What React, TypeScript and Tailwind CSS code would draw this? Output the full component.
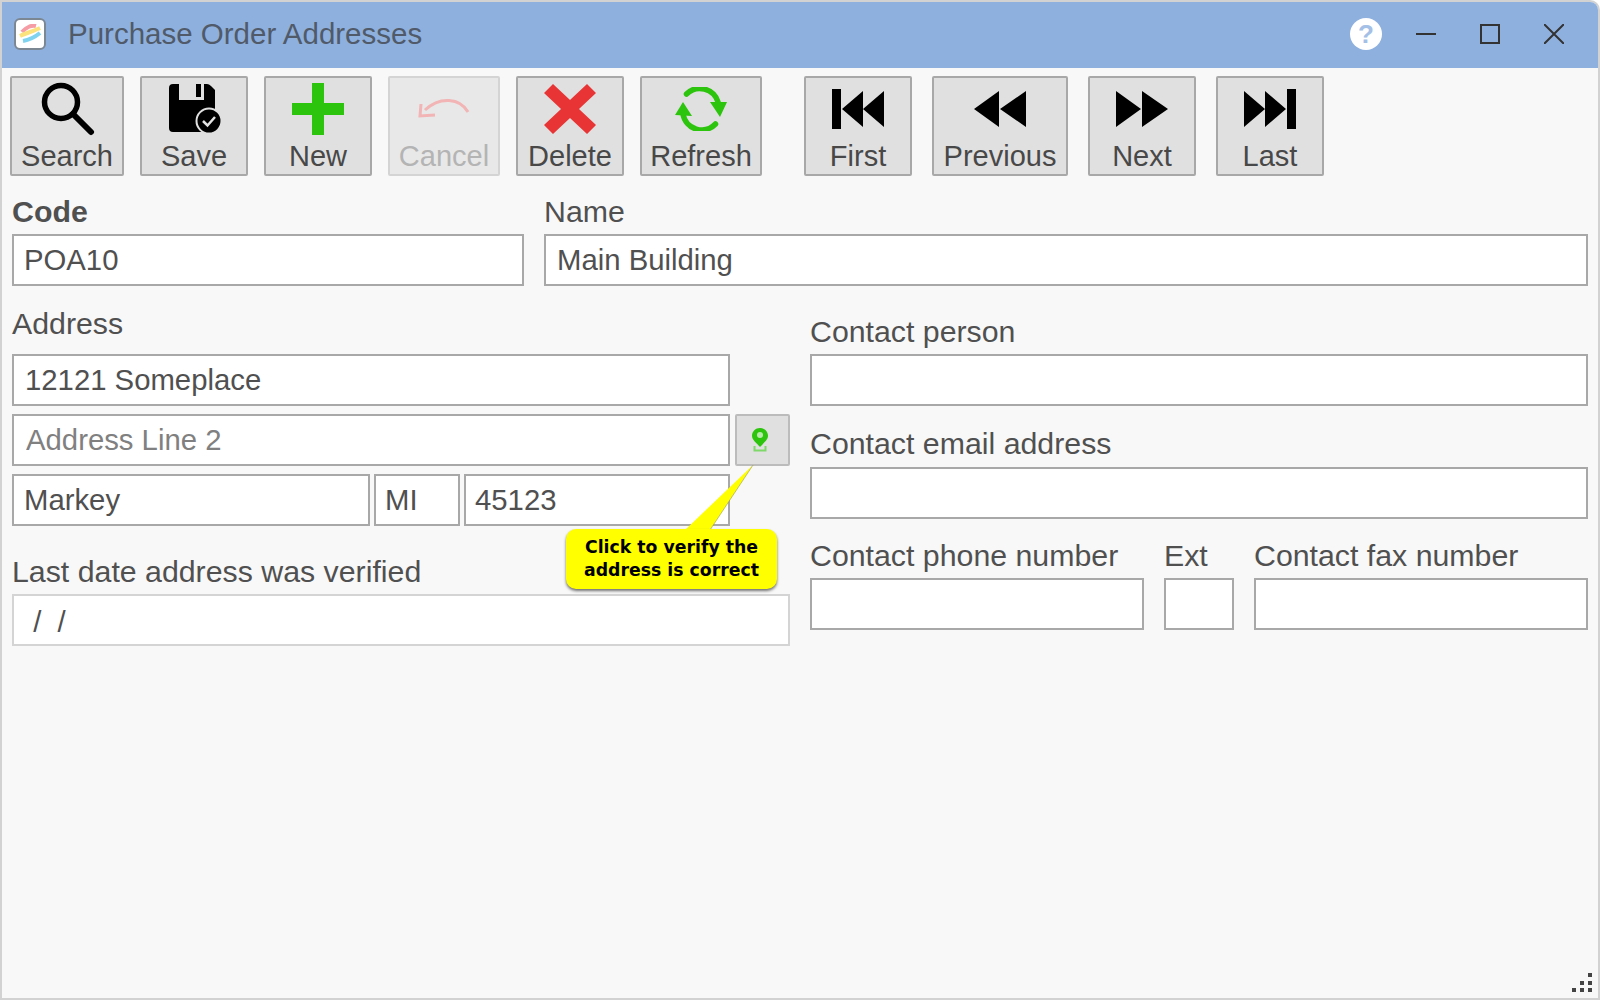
const font = "[font-family:'Liberation_Sans',Arial,sans-serif]";

function Field({
  value,
  placeholder,
  className = "",
  light,
}: {
  value?: string;
  placeholder?: string;
  className?: string;
  light?: boolean;
}) {
  return (
    <input
      readOnly
      defaultValue={value}
      placeholder={placeholder}
      className={`h-[52px] min-w-0 border-2 bg-white text-[29.3px] text-[#505050] outline-none placeholder:text-[#808080] ${
        light ? "border-[#d4d4d4]" : "border-[#a8a8a8]"
      } ${className}`}
    />
  );
}

function Label({ children, className = "" }: { children: string; className?: string }) {
  return <div className={`h-[36px] text-[30.3px] leading-[36px] text-[#505050] ${className}`}>{children}</div>;
}

function SearchIcon() {
  return (
    <svg width="54" height="54" viewBox="0 0 54 54" className="block">
      <circle cx="20" cy="20" r="16.5" fill="none" stroke="#000" strokeWidth="5.5" />
      <path d="M32 32 L50 50" stroke="#000" strokeWidth="6" strokeLinecap="round" />
    </svg>
  );
}

function SaveIcon() {
  return (
    <svg width="54" height="50" viewBox="0 0 54 50" className="block">
      <path
        d="M4 0 H10 V16 H35 V0 H38 Q40 0 42 2 L46 6 V44 Q46 48 42 48 H4 Q0 48 0 44 V4 Q0 0 4 0 Z"
        fill="#000"
      />
      <rect x="27" y="0" width="5" height="13" fill="#000" />
      <circle cx="40" cy="37" r="12.5" fill="#000" stroke="#e0e0e0" strokeWidth="2" />
      <path d="M34 37 L38.5 41.5 L46 33" fill="none" stroke="#e4e4e4" strokeWidth="2.5" />
    </svg>
  );
}

function PlusIcon() {
  return (
    <svg width="52" height="52" viewBox="0 0 52 52" className="block">
      <path d="M20 0 H32 V20 H52 V32 H32 V52 H20 V32 H0 V20 H20 Z" fill="#2cc40c" />
    </svg>
  );
}

function UndoIcon() {
  return (
    <svg width="52" height="52" viewBox="0 -13 52 52" className="block">
      <path d="M50 16 C42 2 22 0 7 14" fill="none" stroke="#f2b4b4" strokeWidth="3" />
      <path d="M3 8 L2 20 L17 19" fill="none" stroke="#f2b4b4" strokeWidth="3" />
    </svg>
  );
}

function DeleteIcon() {
  return (
    <svg width="52" height="52" viewBox="0 0 52 52" className="block">
      <path
        d="M9 1 L26 17 L43 1 L52 10 L35 26 L52 42 L43 51 L26 35 L9 51 L0 42 L17 26 L0 10 Z"
        fill="#e83434"
      />
    </svg>
  );
}

function RefreshIcon() {
  return (
    <svg width="52" height="44" viewBox="0 0 52 44" className="block">
      <path d="M11.5 7 A19 19 0 0 1 43 15" fill="none" stroke="#2cc40c" strokeWidth="5.5" strokeLinecap="round" />
      <path d="M35 15 L52 15 L45 30 Z" fill="#2cc40c" />
      <path d="M40.5 37 A19 19 0 0 1 8 27" fill="none" stroke="#2cc40c" strokeWidth="5.5" strokeLinecap="round" />
      <path d="M0 28 L17 29 L8 15 Z" fill="#2cc40c" />
    </svg>
  );
}

function NavIcon({ kind }: { kind: "first" | "previous" | "next" | "last" }) {
  const paths = {
    first: "M0 0 H9 V40 H0 Z M10 20 L31 2 V38 Z M31 20 L52 2 V38 Z",
    previous: "M0 20 L25 2 V38 Z M26 20 L52 2 V38 Z",
    next: "M0 2 L25 20 L0 38 Z M26 2 L52 20 L26 38 Z",
    last: "M43 0 H52 V40 H43 Z M42 20 L21 2 V38 Z M21 20 L0 2 V38 Z",
  };
  return (
    <svg width="52" height="40" viewBox="0 0 52 40" className="block">
      <path d={paths[kind]} fill="#000" />
    </svg>
  );
}

function ToolButton({
  label,
  width,
  iconBox = "",
  disabled,
  children,
}: {
  label: string;
  width: string;
  iconBox?: string;
  disabled?: boolean;
  children: React.ReactNode;
}) {
  return (
    <button
      className={`flex h-[100px] shrink-0 flex-col items-center rounded-[2px] border-2 ${width} ${
        disabled ? "border-[#d4d4d4] bg-[#e8e8e8] text-[#b4b4b4]" : "border-[#a8a8a8] bg-[#e0e0e0] text-[#484848]"
      }`}
    >
      <div className={`flex h-[61px] w-full items-center justify-center ${iconBox}`}>{children}</div>
      <span className="text-[29px] leading-[34px]">{label}</span>
    </button>
  );
}

export default function App() {
  return (
    <div className={`relative flex h-[1000px] w-[1600px] flex-col rounded-tr-[10px] border-2 border-[#d2d2d2] bg-[#f8f8f8] ${font}`}>
      <div className="flex h-[66px] shrink-0 items-center rounded-tr-[8px] bg-[#8eb0df] pb-[2px]">
        <div className="ml-[12px] flex h-[32px] w-[32px] items-center justify-center rounded-[6px] border-2 border-[#7c8794] bg-white">
          <svg width="24" height="20" viewBox="0 0 24 20">
            <path d="M4 8 C8 3 14 1 18 2" fill="none" stroke="#f59ca4" strokeWidth="4" />
            <path d="M2 12 C8 9 16 7 22 4" fill="none" stroke="#fbe27c" strokeWidth="4" />
            <path d="M5 17 C11 16 17 13 22 9" fill="none" stroke="#7fd3ef" strokeWidth="4" />
          </svg>
        </div>
        <div className="ml-[22px] text-[29.5px] text-[#505a68]">Purchase Order Addresses</div>
        <div className="ml-auto mr-[34px] flex items-center">
          <div className="flex h-[32px] w-[32px] items-center justify-center rounded-full bg-white text-[26px] font-bold text-[#a4c0e6]">
            ?
          </div>
          <svg width="20" height="20" viewBox="0 0 20 20" className="ml-[34px]">
            <path d="M0 10 H20" stroke="#333" strokeWidth="2" />
          </svg>
          <svg width="20" height="20" viewBox="0 0 20 20" className="ml-[44px]">
            <rect x="1" y="1" width="18" height="18" fill="none" stroke="#333" strokeWidth="2" />
          </svg>
          <svg width="20" height="20" viewBox="0 0 20 20" className="ml-[44px]">
            <path d="M0 0 L20 20 M20 0 L0 20" stroke="#333" strokeWidth="2" />
          </svg>
        </div>
      </div>

      <div className="flex shrink-0 pl-[8px] pt-[8px]">
        <div className="flex gap-[16px]">
          <ToolButton label="Search" width="w-[114px]" iconBox="pl-[2px]">
            <SearchIcon />
          </ToolButton>
          <ToolButton label="Save" width="w-[108px]" iconBox="pl-[4px]">
            <SaveIcon />
          </ToolButton>
          <ToolButton label="New" width="w-[108px]">
            <PlusIcon />
          </ToolButton>
          <ToolButton label="Cancel" width="w-[112px]" disabled>
            <UndoIcon />
          </ToolButton>
          <ToolButton label="Delete" width="w-[108px]">
            <DeleteIcon />
          </ToolButton>
          <ToolButton label="Refresh" width="w-[122px]">
            <RefreshIcon />
          </ToolButton>
        </div>
        <div className="ml-[42px] flex gap-[20px]">
          <ToolButton label="First" width="w-[108px]">
            <NavIcon kind="first" />
          </ToolButton>
          <ToolButton label="Previous" width="w-[136px]">
            <NavIcon kind="previous" />
          </ToolButton>
          <ToolButton label="Next" width="w-[108px]">
            <NavIcon kind="next" />
          </ToolButton>
          <ToolButton label="Last" width="w-[108px]">
            <NavIcon kind="last" />
          </ToolButton>
        </div>
      </div>

      <div className="mt-[18px] flex gap-[20px] px-[10px]">
        <div className="flex w-[512px] shrink-0 flex-col">
          <Label className="mb-[4px] font-bold">Code</Label>
          <Field value="POA10" className="px-[10px]" />
        </div>
        <div className="flex flex-1 flex-col">
          <Label className="mb-[4px]">Name</Label>
          <Field value="Main Building" className="px-[11px]" />
        </div>
      </div>

      <div className="grid grid-cols-2 gap-[20px] px-[10px]">
        <div className="flex flex-col pt-[20px]">
          <Label className="mb-[12px]">Address</Label>
          <div className="flex flex-col gap-[8px]">
            <Field value="12121 Someplace" className="w-[718px] px-[11px]" />
            <div className="flex gap-[5px]">
              <Field placeholder="Address Line 2" className="w-[718px] px-[12px]" />
              <button className="flex h-[52px] w-[55px] items-center justify-center rounded-[2px] border-2 border-[#bcbcbc] bg-[#e0e0e0] pr-[6px]">
                <svg width="16" height="24" viewBox="0 0 16 24">
                  <path
                    d="M8 0 C3.5 0 0 3.4 0 7.8 C0 12 4.5 15 8 19 C11.5 15 16 12 16 7.8 C16 3.4 12.5 0 8 0 Z"
                    fill="#2cc40c"
                  />
                  <circle cx="8" cy="7" r="3" fill="#b8e8ac" />
                  <path d="M2.5 18 V22.5 H13.5 V18" fill="none" stroke="#7ed86a" strokeWidth="2" />
                </svg>
              </button>
            </div>
            <div className="flex w-[718px] gap-[4px]">
              <Field value="Markey" className="w-[358px] px-[10px]" />
              <Field value="MI" className="w-[86px] px-[9px]" />
              <Field value="45123" className="w-[266px] px-[9px]" />
            </div>
          </div>
          <Label className="mb-[4px] mt-[28px]">Last date address was verified</Label>
          <Field value=" /  /" light className="w-full px-[11px] pt-[3px]" />
        </div>

        <div className="flex flex-col pt-[28px]">
          <Label className="mb-[4px]">Contact person</Label>
          <Field className="w-full" />
          <Label className="mb-[5px] mt-[20px]">Contact email address</Label>
          <Field className="w-full" />
          <div className="mt-[19px] flex gap-[20px]">
            <div className="flex w-[334px] shrink-0 flex-col">
              <Label className="mb-[4px]">Contact phone number</Label>
              <Field className="w-full" />
            </div>
            <div className="flex w-[70px] shrink-0 flex-col">
              <Label className="mb-[4px]">Ext</Label>
              <Field className="w-full" />
            </div>
            <div className="flex flex-1 flex-col">
              <Label className="mb-[4px]">Contact fax number</Label>
              <Field className="w-full" />
            </div>
          </div>
        </div>
      </div>

      {/* callout over the verify button */}
      <svg width="90" height="70" viewBox="0 0 90 70" className="absolute left-[678px] top-[461px]">
        <path d="M5 67 L73 2 L30 67 Z" fill="#ffff00" />
        <path d="M73 2 L30 67" stroke="#8a8a50" strokeWidth="1" fill="none" opacity="0.5" />
      </svg>
      <div className="absolute left-[564px] top-[527px] flex h-[60px] w-[211px] flex-col items-center justify-center rounded-[10px] bg-[#ffff00] text-center font-['DejaVu_Sans',sans-serif] text-[17.3px] font-bold leading-[23px] text-black shadow-[0_2px_3px_rgba(0,0,0,0.55)]">
        <div>Click to verify the</div>
        <div>address is correct</div>
      </div>

      <svg width="24" height="24" viewBox="0 0 24 24" className="absolute bottom-[3px] right-[3px]">
        <g fill="#444">
          <rect x="17" y="2" width="4" height="4" />
          <rect x="9" y="10" width="4" height="4" />
          <rect x="17" y="10" width="4" height="4" />
          <rect x="1" y="17" width="4" height="4" />
          <rect x="9" y="17" width="4" height="4" />
          <rect x="17" y="17" width="4" height="4" />
        </g>
      </svg>
    </div>
  );
}
